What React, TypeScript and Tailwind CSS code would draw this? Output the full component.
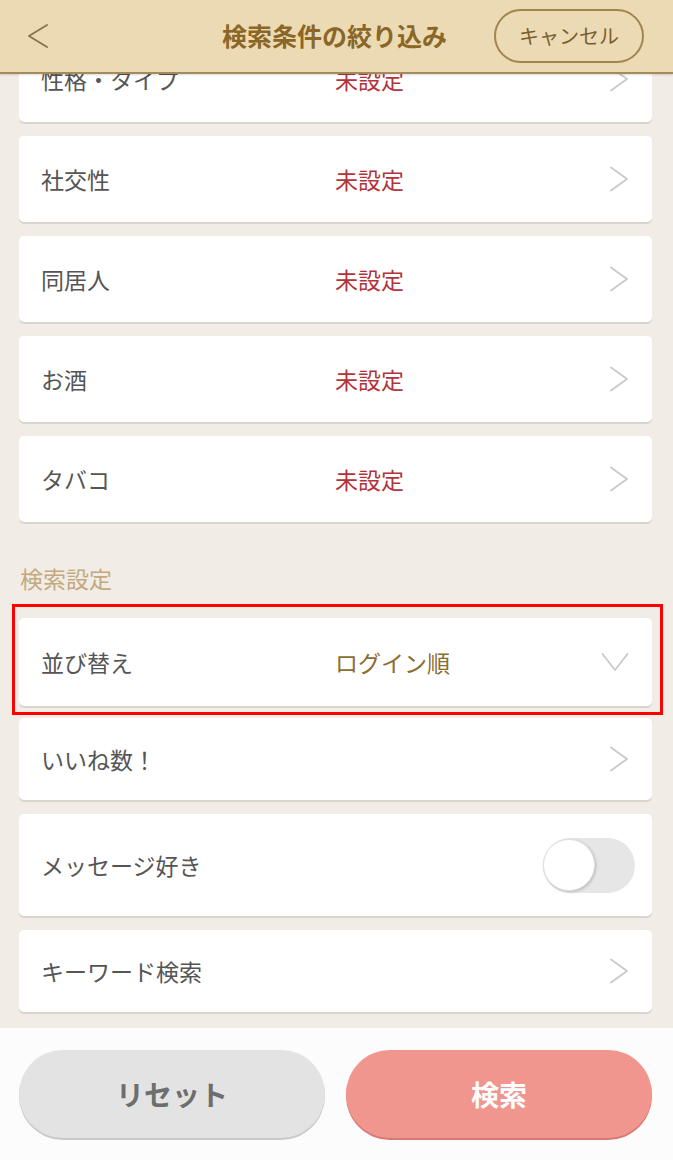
import React from 'react';

const FONT = { fontFamily: '"Noto Sans CJK JP", "Noto Sans", sans-serif' };

const ChevronRight: React.FC = () => (
  <svg width="20" height="26" viewBox="0 0 20 26" fill="none">
    <path d="M2 1.5 L18 13 L2 24.5" stroke="#c9c9c9" strokeWidth="1.8" strokeLinecap="round" strokeLinejoin="round" />
  </svg>
);

const ChevronDown: React.FC = () => (
  <svg width="28" height="20" viewBox="0 0 28 20" fill="none">
    <path d="M1.5 2 L14 18 L26.5 2" stroke="#c9c9c9" strokeWidth="1.8" strokeLinecap="round" strokeLinejoin="round" />
  </svg>
);

type RowProps = {
  label: string;
  value?: string;
  valueClass?: string;
  height: string;
  right?: React.ReactNode;
  highlight?: boolean;
};

const Row: React.FC<RowProps> = ({ label, value, valueClass = 'text-[#b3333a]', height, right, highlight }) => (
  <div className={`relative ml-[19px] mr-[21px] flex items-center rounded-[5px] bg-white shadow-[0_2px_0_#d9d4cd] ${height}`}>
    <div className="w-[316px] pl-[22px] text-[23px] text-[#555555]">{label}</div>
    <div className={`flex-1 text-[23px] ${valueClass}`}>{value}</div>
    <div className="flex items-center pr-[23px]">{right ?? <ChevronRight />}</div>
    {highlight && (
      <div className="pointer-events-none absolute -left-[7px] -right-[11px] -top-[14px] -bottom-[9px] border-[3px] border-[#ff0000]" />
    )}
  </div>
);

const App: React.FC = () => {
  const basic = ['性格・タイプ', '社交性', '同居人', 'お酒', 'タバコ'];

  return (
    <div className="relative flex h-[1160px] w-[673px] flex-col overflow-hidden bg-[#f1ece6]" style={FONT}>
      {/* header over the list */}
      <div className="absolute inset-x-0 top-0 z-10 flex h-[74px] items-center border-b-2 border-[#a38b5b] bg-[#ecdab5] shadow-[0_1px_2px_rgba(0,0,0,0.15)]">
        <div className="pl-[26px]">
          <svg width="24" height="26" viewBox="0 0 24 26" fill="none">
            <path d="M21 2 L3 13 L21 24" stroke="#8a7550" strokeWidth="2" strokeLinecap="round" strokeLinejoin="round" />
          </svg>
        </div>
        <div className="flex-1 pl-[172px] text-[25px] font-bold text-[#8a6726]">検索条件の絞り込み</div>
        <div className="mr-[29px] flex h-[54px] w-[150px] items-center justify-center rounded-full border-2 border-[#a08550] text-[20px] text-[#7a5f2e]">
          キャンセル
        </div>
      </div>

      <div className="flex flex-1 flex-col pt-[36px]">
        <div className="flex flex-col gap-[14px]">
          {basic.map(label => (
            <Row key={label} label={label} value="未設定" height="h-[86px]" />
          ))}
        </div>

        <div className="pl-[20px] pt-[44px] pb-[28px] text-[23px] leading-[24px] text-[#c2aa7c]">検索設定</div>

        <Row
          label="並び替え"
          value="ログイン順"
          valueClass="text-[#8b6d2e]"
          height="h-[88px]"
          right={<ChevronDown />}
          highlight
        />
        <div className="mt-[12px] flex flex-col gap-[14px]">
          <Row label="いいね数！" height="h-[82px]" />
          <Row
            label="メッセージ好き"
            height="h-[102px]"
            right={
              <div className="mr-[-6px] flex h-[55px] w-[92px] items-center rounded-full bg-[#e6e6e6]">
                <div className="h-[52px] w-[52px] rounded-full border border-[#e2e2e2] bg-white shadow-[1px_1px_3px_rgba(0,0,0,0.2)]" />
              </div>
            }
          />
          <Row label="キーワード検索" height="h-[82px]" />
        </div>
      </div>

      <div className="flex h-[132px] gap-[21px] bg-[#fcfcfc] pl-[19px] pr-[21px] pt-[22px]">
        <div className="flex h-[88px] flex-1 items-center justify-center rounded-full bg-[#e3e3e3] text-[28px] font-bold text-[#6e6e6e] shadow-[0_2px_0_#c9c9c9]">
          リセット
        </div>
        <div className="flex h-[88px] flex-1 items-center justify-center rounded-full bg-[#f1958f] text-[28px] font-bold text-white shadow-[0_2px_0_#d77a74]">
          検索
        </div>
      </div>
    </div>
  );
};

export default App;
